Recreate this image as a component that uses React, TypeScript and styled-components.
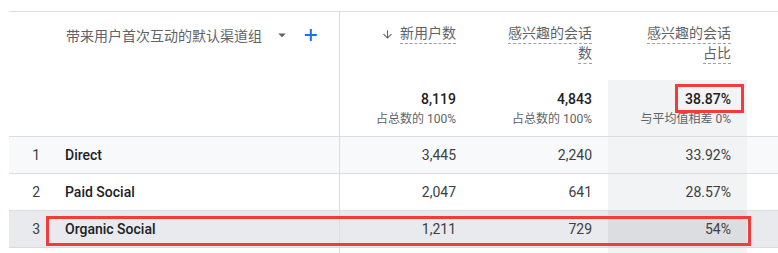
import React from 'react';
import styled, { createGlobalStyle } from 'styled-components';

const GlobalStyle = createGlobalStyle`
    html, body {
        margin: 0;
        padding: 0;
        background: #ffffff;
        overflow: hidden;
    }
    body {
        font-family: Roboto, "Noto Sans CJK SC", "Noto Sans", sans-serif;
        color: #3c4043;
    }
`;

const COLUMNS = '41px 290px 132px 136px 139px 1fr';

type Tone = 'white' | 'light' | 'hover';

const rowColors: Record<Tone, { base: string; highlight: string }> = {
    white: { base: '#ffffff', highlight: '#f1f3f4' },
    light: { base: '#f8f9fa', highlight: '#f1f3f4' },
    hover: { base: '#e8eaed', highlight: '#dcdde0' },
};

const Page = styled.div`
    padding: 11px 0 0 9px;
`;

const TableBox = styled.div`
    position: relative;
    width: 769px;
    border-top: 1px solid #dadce0;
`;

const Row = styled.div<{ $tone?: Tone; $height: number; $border?: boolean }>`
    display: grid;
    grid-template-columns: ${COLUMNS};
    height: ${({ $height }) => $height}px;
    background-color: ${({ $tone = 'white' }) => rowColors[$tone].base};
    ${({ $border }) => $border && 'border-bottom: 1px solid #dadce0;'}
`;

const Cell = styled.div<{ $tone?: Tone; $highlight?: boolean; $align?: 'left' | 'right' }>`
    box-sizing: border-box;
    display: flex;
    align-items: center;
    justify-content: ${({ $align }) => ($align === 'right' ? 'flex-end' : 'flex-start')};
    padding-right: ${({ $align }) => ($align === 'right' ? '16px' : '0')};
    font-size: 14px;
    color: #3c4043;
    ${({ $highlight, $tone = 'white' }) => $highlight && `background-color: ${rowColors[$tone].highlight};`}
`;

const IndexCell = styled(Cell)`
    justify-content: flex-end;
    padding-right: 10px;
`;

const NameCell = styled(Cell)<{ $pad?: number; $top?: boolean }>`
    border-right: 1px solid #dadce0;
    padding-left: ${({ $pad = 15 }) => $pad}px;
    ${({ $top }) => $top && 'align-items: flex-start;'}
    font-weight: 500;
    color: #202124;
`;

const HeaderCell = styled.div<{ $highlight?: boolean }>`
    box-sizing: border-box;
    display: flex;
    flex-direction: column;
    align-items: flex-end;
    padding: 12px 16px 0 0;
    ${({ $highlight }) => $highlight && 'background-color: #f1f3f4;'}
`;

const DimensionHeader = styled.div`
    display: flex;
    align-items: center;
    height: 24px;
    margin-top: 11px;
    font-size: 14px;
    font-weight: 400;
    color: #5f6368;

    svg {
        flex: none;
    }
    .drop {
        margin-left: 11px;
        fill: #5f6368;
    }
    .add {
        margin-left: 10px;
        fill: #1a73e8;
    }
`;

const TitleRow = styled.div`
    display: flex;
    align-items: flex-start;
    gap: 6px;

    svg {
        margin-top: 4px;
        fill: #5f6368;
    }
`;

const TitleLine = styled.span`
    display: inline-block;
    font-size: 14px;
    line-height: 19px;
    color: #5f6368;
    border-bottom: 1px dashed #9aa0a6;
`;

const TotalValue = styled.div`
    margin-top: -3px;
    font-size: 14px;
    line-height: 20px;
    font-weight: 500;
    color: #202124;
`;

const TotalNote = styled.div`
    margin-top: 2px;
    font-size: 12px;
    line-height: 16px;
    color: #5f6368;
`;

const Marker = styled.div`
    position: absolute;
    box-sizing: border-box;
    border: 3px solid #f23b3b;
    pointer-events: none;
`;

const ArrowDown = () => (
    <svg width='13' height='13' viewBox='0 0 24 24'>
        <path d='M20 12l-1.41-1.41L13 16.17V4h-2v12.17l-5.58-5.59L4 12l8 8 8-8z' />
    </svg>
);

interface DataRow {
    index: number;
    name: string;
    users: string;
    sessions: string;
    rate: string;
    tone: Tone;
}

const rows: DataRow[] = [
    { index: 1, name: 'Direct', users: '3,445', sessions: '2,240', rate: '33.92%', tone: 'light' },
    { index: 2, name: 'Paid Social', users: '2,047', sessions: '641', rate: '28.57%', tone: 'white' },
    { index: 3, name: 'Organic Social', users: '1,211', sessions: '729', rate: '54%', tone: 'hover' },
];

const App = () => {
    return (
        <Page>
            <GlobalStyle />
            <TableBox>
                <Row $height={68}>
                    <div />
                    <NameCell $pad={16} $top>
                        <DimensionHeader>
                            带来用户首次互动的默认渠道组
                            <svg className='drop' width='18' height='18' viewBox='0 0 24 24'>
                                <path d='M7 10l5 5 5-5z' />
                            </svg>
                            <svg className='add' width='20' height='20' viewBox='0 0 24 24'>
                                <path d='M19 13.2h-6v6h-2.4v-6h-6v-2.4h6v-6H13v6h6z' />
                            </svg>
                        </DimensionHeader>
                    </NameCell>
                    <HeaderCell>
                        <TitleRow>
                            <ArrowDown />
                            <TitleLine>新用户数</TitleLine>
                        </TitleRow>
                    </HeaderCell>
                    <HeaderCell>
                        <TitleLine>感兴趣的会话</TitleLine>
                        <TitleLine>数</TitleLine>
                    </HeaderCell>
                    <HeaderCell>
                        <TitleLine>感兴趣的会话</TitleLine>
                        <TitleLine>占比</TitleLine>
                    </HeaderCell>
                    <div />
                </Row>
                <Row $height={56} $border>
                    <div />
                    <NameCell />
                    <HeaderCell>
                        <TotalValue>8,119</TotalValue>
                        <TotalNote>占总数的 100%</TotalNote>
                    </HeaderCell>
                    <HeaderCell>
                        <TotalValue>4,843</TotalValue>
                        <TotalNote>占总数的 100%</TotalNote>
                    </HeaderCell>
                    <HeaderCell $highlight>
                        <TotalValue>38.87%</TotalValue>
                        <TotalNote>与平均值相差 0%</TotalNote>
                    </HeaderCell>
                    <div />
                </Row>
                {rows.map(row => (
                    <Row key={row.index} $height={36} $tone={row.tone} $border>
                        <IndexCell>{row.index}</IndexCell>
                        <NameCell>{row.name}</NameCell>
                        <Cell $align='right'>{row.users}</Cell>
                        <Cell $align='right'>{row.sessions}</Cell>
                        <Cell $align='right' $highlight $tone={row.tone}>{row.rate}</Cell>
                        <div />
                    </Row>
                ))}
                <Row $height={5}>
                    <div />
                    <NameCell />
                    <Cell />
                    <Cell />
                    <Cell $highlight />
                    <div />
                </Row>
                <Marker style={{ left: 666, top: 72, width: 69, height: 29 }} />
                <Marker style={{ left: 37, top: 204, width: 705, height: 30 }} />
            </TableBox>
        </Page>
    );
};

export default App;
